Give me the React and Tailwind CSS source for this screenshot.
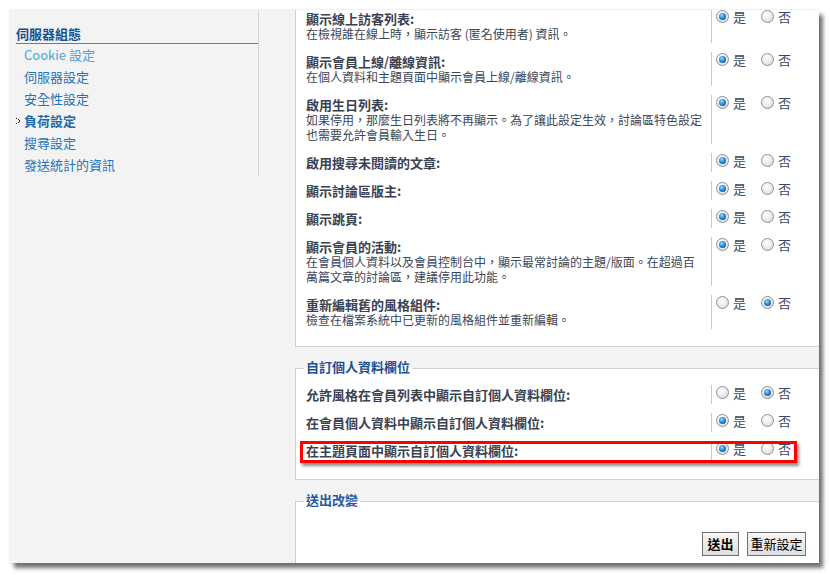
import React from "react";

const loadRows = [
  { title: "顯示線上訪客列表:", desc: ["在檢視誰在線上時，顯示訪客 (匿名使用者) 資訊。"], on: true },
  { title: "顯示會員上線/離線資訊:", desc: ["在個人資料和主題頁面中顯示會員上線/離線資訊。"], on: true },
  {
    title: "啟用生日列表:",
    desc: ["如果停用，那麼生日列表將不再顯示。為了讓此設定生效，討論區特色設定", "也需要允許會員輸入生日。"],
    on: true,
  },
  { title: "啟用搜尋未閱讀的文章:", desc: [], on: true },
  { title: "顯示討論區版主:", desc: [], on: true },
  { title: "顯示跳頁:", desc: [], on: true },
  {
    title: "顯示會員的活動:",
    desc: ["在會員個人資料以及會員控制台中，顯示最常討論的主題/版面。在超過百", "萬篇文章的討論區，建議停用此功能。"],
    on: true,
  },
  { title: "重新編輯舊的風格組件:", desc: ["檢查在檔案系統中已更新的風格組件並重新編輯。"], on: false },
];

const profileRows = [
  { title: "允許風格在會員列表中顯示自訂個人資料欄位:", desc: [], on: false },
  { title: "在會員個人資料中顯示自訂個人資料欄位:", desc: [], on: true },
  { title: "在主題頁面中顯示自訂個人資料欄位:", desc: [], on: true, marked: true },
];

const menu = ["Cookie 設定", "伺服器設定", "安全性設定", "負荷設定", "搜尋設定", "發送統計的資訊"];

function Radio({ on }) {
  return (
    <span className="mt-[1px] w-[13px] h-[13px] shrink-0 rounded-full border border-[#8d9092] bg-[radial-gradient(circle_at_40%_35%,#ffffff,#f0f0f0_40%,#cfd0d1)] flex items-center justify-center">
      {on && (
        <span className="w-[7px] h-[7px] rounded-full bg-[radial-gradient(circle_at_40%_35%,#9adcff,#2a8ad6_45%,#0b3c70)]" />
      )}
    </span>
  );
}

function Row({ row }) {
  return (
    <div className="relative flex mb-[9px]">
      <div className="w-[405px] py-[2px] pr-[7px] text-[#3a4252]">
        <div className="text-[13px] leading-[15px] font-bold whitespace-nowrap">{row.title}</div>
        {row.desc.map((d, i) => (
          <div key={i} className="text-[12px] leading-[15px] whitespace-nowrap text-[#3b4658]">
            {d}
          </div>
        ))}
      </div>
      <div className="border-l border-[#c8c8c8] pl-[4px] flex items-start text-[13px] leading-[15px] text-[#3b4660]">
        <Radio on={row.on} />
        <span className="ml-[4px]">是</span>
        <span className="ml-[15px] flex items-start">
          <Radio on={!row.on} />
          <span className="ml-[4px]">否</span>
        </span>
      </div>
      {row.marked && (
        <div className="absolute left-[-6px] top-0 w-[497px] h-[22px] border-[3px] border-[#ff0000] shadow-[2px_3px_3px_rgba(0,0,0,0.45)]" />
      )}
    </div>
  );
}

export default function App() {
  return (
    <div className="w-[830px] h-[575px] bg-white pt-[10px] pl-[10px] font-['Noto_Sans_CJK_TC',sans-serif]">
      <div className="w-[809px] h-[553px] bg-[#f3f3f3] flex overflow-hidden shadow-[4px_5px_4px_rgba(0,0,0,0.55),0_0_2px_rgba(0,0,0,0.15)]">
        <div className="w-[249px] self-start border-r border-[#d2d2da] pt-[16px]">
          <div className="ml-[6px] border-b border-[#3a8ac6] pb-[1px] text-[13px] leading-[16px] font-bold text-[#16508f]">
            伺服器組態
          </div>
          {menu.map((m, i) => (
            <div
              key={m}
              className={
                "relative pl-[14px] text-[13px] leading-[22px] " +
                (i === 0
                  ? "text-[#4aa3dc]"
                  : i === 3
                  ? "font-bold text-[#1c6aa8]"
                  : "text-[#1f74ba]")
              }
            >
              {i === 3 && (
                <svg className="absolute left-[6px] top-[8px]" width="4" height="6" viewBox="0 0 4 6">
                  <path d="M0 0h1v1H0zM2 1h1v1H2zM3 2h1v2H3zM2 4h1v1H2zM0 5h1v1H0z" fill="#222" />
                </svg>
              )}
              {m}
            </div>
          ))}
        </div>

        <div className="ml-[36px] flex-1 flex flex-col">
          <div className="h-[337px] shrink-0 bg-white border-l border-b border-[#d0d0d0] pl-[10px]">
            <div className="-mt-[1px]">
              {loadRows.map((r) => (
                <Row key={r.title} row={r} />
              ))}
            </div>
          </div>

          <fieldset className="mt-[13px] bg-white border border-r-0 border-[#d0d0d0] pl-[10px] pt-[8px] pb-[10px]">
            <legend className="-ml-[2px] px-[2px] pb-[4px] text-[13px] leading-[13px] font-bold text-[#1f4f93]">
              自訂個人資料欄位
            </legend>
            {profileRows.map((r) => (
              <Row key={r.title} row={r} />
            ))}
          </fieldset>

          <fieldset className="mt-[13px] bg-white border border-r-0 border-[#d0d0d0] pl-[10px] pr-[13px] pt-[22px] pb-[20px]">
            <legend className="-ml-[2px] px-[2px] pb-[4px] text-[13px] leading-[13px] font-bold text-[#1f5aa2]">
              送出改變
            </legend>
            <div className="flex justify-end gap-[8px]">
              <button className="w-[37px] h-[24px] px-0 whitespace-nowrap border border-[#707070] bg-[linear-gradient(#f6f6f6,#dedede)] text-[13px] leading-[22px] font-bold text-black">
                送出
              </button>
              <button className="w-[59px] h-[24px] px-0 whitespace-nowrap border border-[#707070] bg-[linear-gradient(#f6f6f6,#dedede)] text-[13px] leading-[22px] text-black">
                重新設定
              </button>
            </div>
          </fieldset>
        </div>
      </div>
    </div>
  );
}
